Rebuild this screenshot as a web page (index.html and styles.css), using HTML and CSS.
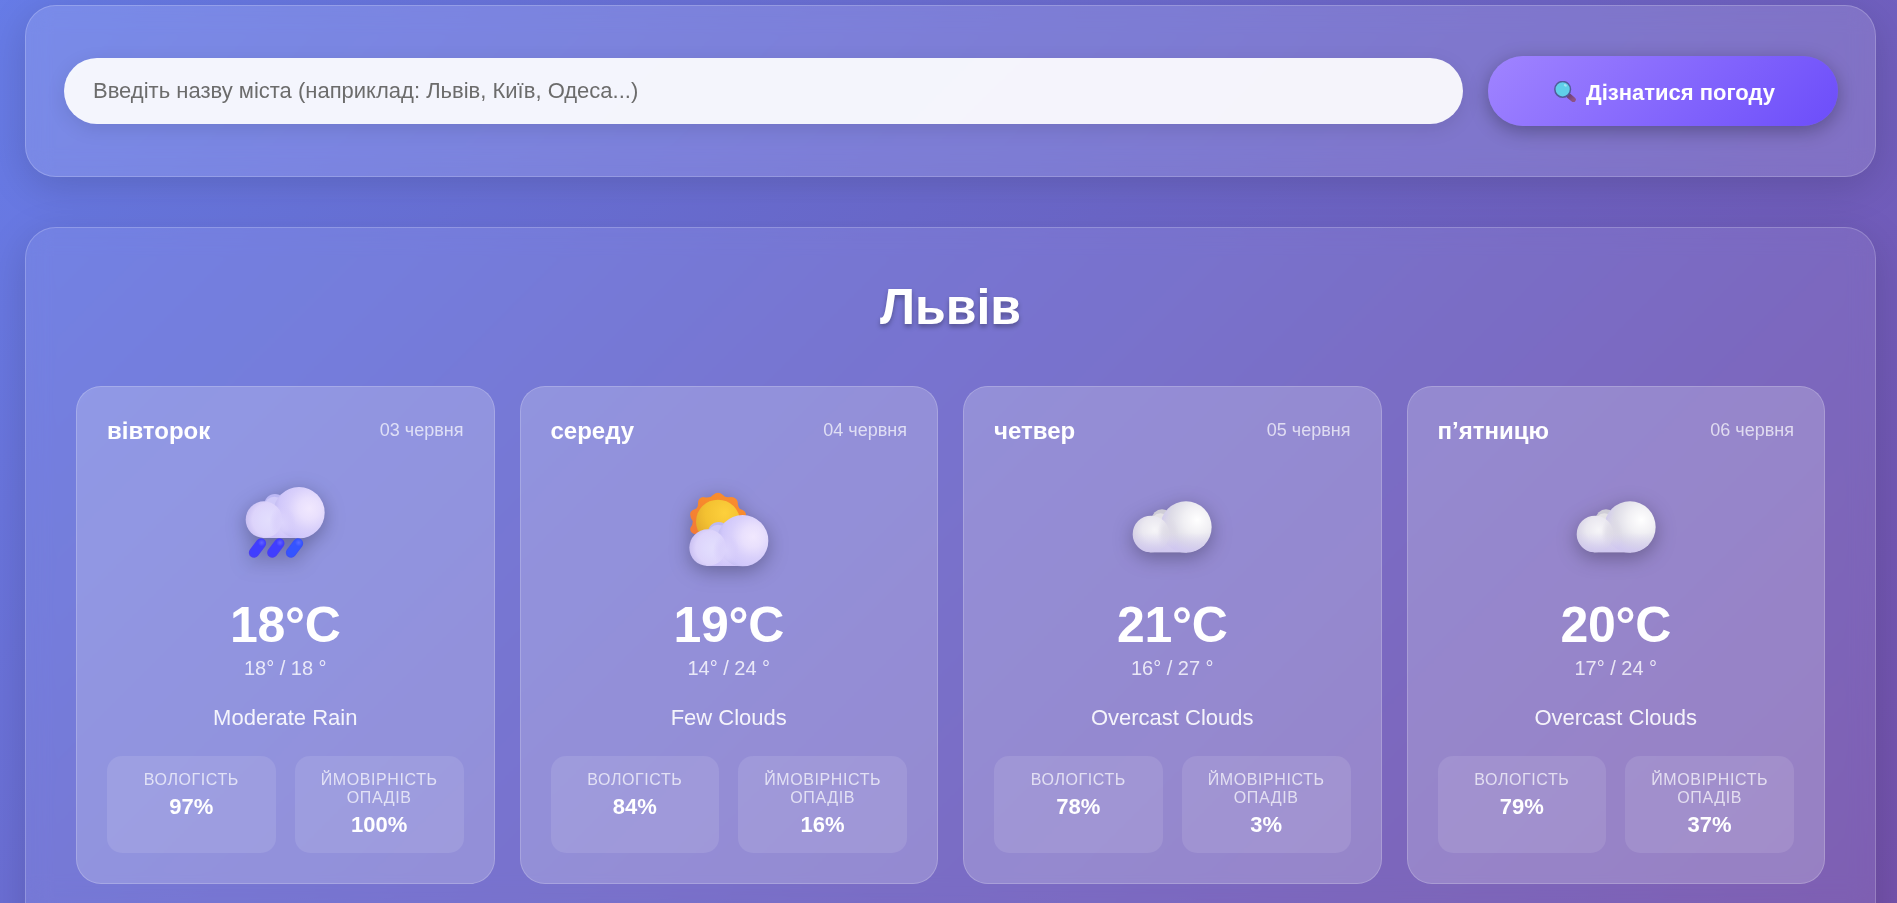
FILE: index.html
```html
<!DOCTYPE html>
<html lang="uk">
<head>
<meta charset="utf-8">
<title>Погода</title>
<link rel="stylesheet" href="styles.css">
</head>
<body>
<svg class="defs" aria-hidden="true">
  <defs>
    <radialGradient id="lilacBig" cx="0.7" cy="0.42" r="0.7">
      <stop offset="0" stop-color="#f1e8fe"/><stop offset="0.3" stop-color="#e9e0fd"/><stop offset="0.6" stop-color="#d9d0fb"/><stop offset="0.85" stop-color="#d0c7fa"/><stop offset="1" stop-color="#c1bbf0"/>
    </radialGradient>
    <radialGradient id="lilacSmall" cx="0.64" cy="0.5" r="0.65">
      <stop offset="0" stop-color="#e3defd"/><stop offset="0.35" stop-color="#e0dafd"/><stop offset="0.7" stop-color="#ddd4fb"/><stop offset="1" stop-color="#c9bff2"/>
    </radialGradient>
    <linearGradient id="lilacBase" x1="0" y1="0" x2="0" y2="1">
      <stop offset="0" stop-color="#d8d0fb"/><stop offset="1" stop-color="#cfc4fa"/>
    </linearGradient>
    <radialGradient id="fade">
      <stop offset="0" stop-color="#dcd4fc"/><stop offset="0.5" stop-color="#d9d0fb" stop-opacity="0.8"/><stop offset="1" stop-color="#d6ccfb" stop-opacity="0"/>
    </radialGradient>
    <radialGradient id="greyFade">
      <stop offset="0" stop-color="#dedbe6"/><stop offset="0.5" stop-color="#dedbe6" stop-opacity="0.7"/><stop offset="1" stop-color="#dedbe6" stop-opacity="0"/>
    </radialGradient>
    <radialGradient id="greyBig" cx="0.72" cy="0.36" r="0.75">
      <stop offset="0" stop-color="#ffffff"/><stop offset="0.35" stop-color="#f1f0f4"/><stop offset="0.7" stop-color="#dddbe6"/><stop offset="1" stop-color="#cdc5ee"/>
    </radialGradient>
    <radialGradient id="greySmall" cx="0.6" cy="0.38" r="0.68">
      <stop offset="0" stop-color="#f6f5f8"/><stop offset="0.5" stop-color="#eae8f0"/><stop offset="1" stop-color="#d0cbe2"/>
    </radialGradient>
    <linearGradient id="greyBase" x1="0" y1="0" x2="0" y2="1">
      <stop offset="0" stop-color="#d5cdf3" stop-opacity="0"/><stop offset="1" stop-color="#cfc6f1"/>
    </linearGradient>
    <radialGradient id="sunCore" cx="0.65" cy="0.3" r="0.8">
      <stop offset="0" stop-color="#fdd03c"/><stop offset="0.55" stop-color="#f3c131"/><stop offset="1" stop-color="#dfa52b"/>
    </radialGradient>
    <linearGradient id="sunRays" x1="0" y1="1" x2="1" y2="0">
      <stop offset="0" stop-color="#f1763b"/><stop offset="0.6" stop-color="#f88c2a"/><stop offset="1" stop-color="#fb8a34"/>
    </linearGradient>
    <radialGradient id="dropA">
      <stop offset="0" stop-color="#6261ff"/><stop offset="1" stop-color="#403eff"/>
    </radialGradient>
    <radialGradient id="dropB">
      <stop offset="0" stop-color="#586aff"/><stop offset="1" stop-color="#3554ff"/>
    </radialGradient>
    <linearGradient id="handle" x1="0" y1="0" x2="1" y2="1">
      <stop offset="0" stop-color="#6f4279"/><stop offset="1" stop-color="#8d5285"/>
    </linearGradient>
    <clipPath id="cloudShape">
      <path d="M132 204 A55 55 0 1 1 164 104.500 A77 77 0 1 1 237 204 Z"/>
    </clipPath>
    <g id="lilacCloud">
      <circle cx="165" cy="104" r="32" fill="#bcb8f4"/>
      <circle cx="163" cy="110" r="30" fill="#d0caf9"/>
      <rect x="128" y="130" width="112" height="74" fill="url(#lilacBase)"/>
      <circle cx="237" cy="128" r="77" fill="url(#lilacBig)"/>
      <circle cx="132" cy="149" r="55" fill="url(#lilacSmall)"/>
      <ellipse cx="188" cy="158" rx="40" ry="50" fill="url(#fade)" clip-path="url(#cloudShape)"/>
    </g>
    <g id="greyCloud">
      <circle cx="165" cy="106" r="31" fill="#cfcdd7"/>
      <circle cx="160" cy="116" r="29" fill="#e5e3e6"/>
      <rect x="128" y="130" width="112" height="74" fill="#d7d1ec"/>
      <circle cx="237" cy="128" r="77" fill="url(#greyBig)"/>
      <circle cx="132" cy="149" r="55" fill="url(#greySmall)"/>
      <ellipse cx="183" cy="148" rx="32" ry="54" fill="url(#greyFade)" clip-path="url(#cloudShape)"/>
      <rect x="70" y="145" width="250" height="59" fill="url(#greyBase)" opacity="0.8" clip-path="url(#cloudShape)"/>
    </g>
  </defs>
</svg>

<main class="page">
  <form class="panel search">
    <input class="city-input" type="text" placeholder="Введіть назву міста (наприклад: Львів, Київ, Одеса...)">
    <button class="submit" type="button">
      <svg class="lens" viewBox="0 0 66 63">
        <path d="M45 45 L58 56" stroke="url(#handle)" stroke-width="15" stroke-linecap="round"/>
        <circle cx="26" cy="25" r="23.5" fill="#60cfe9" stroke="#515c99" stroke-width="4.5"/>
        <ellipse cx="34" cy="13" rx="5" ry="3.5" fill="#a2e5f4" transform="rotate(35 34 13)"/>
      </svg>
      <span>Дізнатися погоду</span>
    </button>
  </form>

  <section class="panel forecast">
    <h1 class="city">Львів</h1>
    <div class="cards">
      <article class="card">
        <header class="card-head"><h2 class="day">вівторок</h2><span class="date">03 червня</span></header>
        <svg class="weather" viewBox="0 0 390 330">
          <use href="#lilacCloud"/>
          <g stroke-linecap="round" fill="none">
            <path d="M123 220 L102 248" stroke="#4a40f0" stroke-width="31"/><path d="M178 220 L157 248" stroke="#4a40f0" stroke-width="31"/><path d="M234 220 L213 248" stroke="#3c50f4" stroke-width="31"/>
            <path d="M123 220 L103 247" stroke="#403eff" stroke-width="26"/><path d="M178 220 L158 247" stroke="#403eff" stroke-width="26"/><path d="M234 220 L214 247" stroke="#3554ff" stroke-width="26"/>
          </g>
          <circle cx="125" cy="218" r="11" fill="url(#dropA)"/><circle cx="180" cy="218" r="11" fill="url(#dropA)"/><circle cx="236" cy="218" r="11" fill="url(#dropB)"/>
        </svg>
        <div class="temp">18°C</div>
        <div class="range">18° / 18 °</div>
        <p class="desc">Moderate Rain</p>
        <div class="stats">
          <div class="stat"><span class="label">Вологість</span><span class="value">97%</span></div>
          <div class="stat"><span class="label">Ймовірність опадів</span><span class="value">100%</span></div>
        </div>
      </article>

      <article class="card">
        <header class="card-head"><h2 class="day">середу</h2><span class="date">04 червня</span></header>
        <svg class="weather" viewBox="11 0 390 330">
          <path d="M158 75 Q173 62 188 75 Q194 83 204 82 Q226 78 232 95 Q232 110 239 117 Q258 122 257 137 Q250 150 250 160 Q258 178 250 188 Q240 194 234 202 L112 210 Q114 198 107 193 Q87 190 90 174 Q98 164 97 153 Q86 138 91 126 Q96 118 107 116 Q114 110 113 100 Q113 83 128 81 Q150 86 158 75Z" fill="url(#sunRays)"/>
          <circle cx="173" cy="155" r="66" fill="url(#sunCore)"/>
          <use href="#lilacCloud" x="10" y="84"/>
        </svg>
        <div class="temp">19°C</div>
        <div class="range">14° / 24 °</div>
        <p class="desc">Few Clouds</p>
        <div class="stats">
          <div class="stat"><span class="label">Вологість</span><span class="value">84%</span></div>
          <div class="stat"><span class="label">Ймовірність опадів</span><span class="value">16%</span></div>
        </div>
      </article>

      <article class="card">
        <header class="card-head"><h2 class="day">четвер</h2><span class="date">05 червня</span></header>
        <svg class="weather" viewBox="0 0 390 330"><use href="#greyCloud" y="43"/></svg>
        <div class="temp">21°C</div>
        <div class="range">16° / 27 °</div>
        <p class="desc">Overcast Clouds</p>
        <div class="stats">
          <div class="stat"><span class="label">Вологість</span><span class="value">78%</span></div>
          <div class="stat"><span class="label">Ймовірність опадів</span><span class="value">3%</span></div>
        </div>
      </article>

      <article class="card">
        <header class="card-head"><h2 class="day">п’ятницю</h2><span class="date">06 червня</span></header>
        <svg class="weather" viewBox="0 0 390 330"><use href="#greyCloud" y="43"/></svg>
        <div class="temp">20°C</div>
        <div class="range">17° / 24 °</div>
        <p class="desc">Overcast Clouds</p>
        <div class="stats">
          <div class="stat"><span class="label">Вологість</span><span class="value">79%</span></div>
          <div class="stat"><span class="label">Ймовірність опадів</span><span class="value">37%</span></div>
        </div>
      </article>
    </div>
  </section>
</main>
</body>
</html>
```

FILE: styles.css
```css
* { box-sizing: border-box; margin: 0; padding: 0; }

html, body { height: 100%; overflow: hidden; }

body {
  font-family: "Liberation Sans", Arial, sans-serif;
  color: #fff;
  background: linear-gradient(135deg, #667eea 0%, #764ba2 100%) 0 -150px / 100% 1500px no-repeat;
}

.defs { display: block; width: 0; height: 0; }

.page {
  display: flex;
  flex-direction: column;
  gap: 50px;
  height: 100%;
  padding: 5px 21px 0 25px;
  overflow: hidden;
}

.panel {
  flex: none;
  border: 1px solid rgba(255, 255, 255, 0.2);
  border-radius: 31px;
  backdrop-filter: blur(12px);
  box-shadow: 0 10px 40px rgba(0, 0, 0, 0.15);
}

.search {
  display: flex;
  align-items: center;
  gap: 25px;
  height: 172px;
  padding: 0 37px 0 38px;
  background: rgba(255, 255, 255, 0.12);
}

.city-input {
  flex: 1;
  min-width: 0;
  height: 66px;
  padding: 0 29px;
  border: 0;
  border-radius: 33px;
  background: rgba(255, 255, 255, 0.92);
  box-shadow: 0 5px 19px rgba(0, 0, 0, 0.1);
  font: 22px "Liberation Sans", Arial, sans-serif;
}

.city-input::placeholder { color: #6c6c6c; }

.submit {
  display: flex;
  align-items: center;
  justify-content: center;
  gap: 10px;
  width: 350px;
  height: 70px;
  padding-left: 3px;
  border: 0;
  border-radius: 35px;
  background: linear-gradient(135deg, #a084ff 0%, #6c4dfa 100%);
  box-shadow: 0 5px 19px rgba(0, 0, 0, 0.3);
  color: #fff;
  font: bold 22px/25px "Liberation Sans", Arial, sans-serif;
}

.submit span { padding-top: 2px; }

.lens { width: 22px; height: 21px; }

.forecast {
  height: 760px;
  padding: 50px;
  background: rgba(255, 255, 255, 0.08);
}

.city {
  height: 58px;
  margin-bottom: 50px;
  font-size: 50px;
  line-height: 58px;
  text-align: center;
  text-shadow: 0 3px 5px rgba(0, 0, 0, 0.3);
}

.cards {
  display: grid;
  grid-template-columns: repeat(4, 1fr);
  gap: 25px;
}

.card {
  display: flex;
  flex-direction: column;
  align-items: center;
  height: 498px;
  padding: 30px;
  border: 1px solid rgba(255, 255, 255, 0.2);
  border-radius: 25px;
  background: rgba(255, 255, 255, 0.2);
}

.card-head {
  display: flex;
  align-items: center;
  justify-content: space-between;
  width: 100%;
  height: 27px;
}

.day { font-size: 24px; line-height: 27px; }

.date { font-size: 18px; line-height: 21px; opacity: 0.7; }

.weather {
  width: 130px;
  height: 110px;
  margin: 26px 0 15px;
  filter: drop-shadow(0 5px 10px rgba(0, 0, 0, 0.3));
}

.temp {
  margin-bottom: 2px;
  font-size: 50px;
  font-weight: bold;
  line-height: 60px;
  letter-spacing: -0.3px;
}

.range { font-size: 20px; line-height: 23px; opacity: 0.8; }

.desc { margin: 25px 0 26px; font-size: 22px; line-height: 25px; opacity: 0.9; }

.stats {
  display: grid;
  grid-template-columns: 1fr 1fr;
  gap: 19px;
  width: 100%;
  height: 97px;
}

.stat {
  display: flex;
  flex-direction: column;
  align-items: center;
  gap: 5px;
  padding: 15px;
  border-radius: 15px;
  background: rgba(255, 255, 255, 0.1);
  text-align: center;
}

.label {
  font-size: 16px;
  line-height: 18px;
  letter-spacing: 0.6px;
  text-transform: uppercase;
  opacity: 0.7;
}

.value { font-size: 22px; font-weight: bold; line-height: 25px; }
```
